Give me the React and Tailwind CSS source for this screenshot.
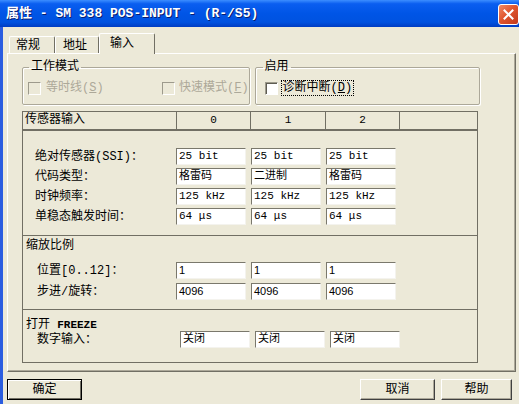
import React from 'react';

const box =
  'h-[17px] w-[70px] bg-white border border-t-[#7A786C] border-l-[#7A786C] border-b-[#F4F3EE] border-r-[#F4F3EE] pl-[2px] leading-[15px] text-[11px] whitespace-nowrap overflow-hidden';

const sensorRows = [
  { label: '绝对传感器(SSI)：', values: ['25 bit', '25 bit', '25 bit'] },
  { label: '代码类型：', values: ['格雷码', '二进制', '格雷码'] },
  { label: '时钟频率：', values: ['125 kHz', '125 kHz', '125 kHz'] },
  { label: '单稳态触发时间：', values: ['64 μs', '64 μs', '64 μs'] },
];

const scaleRows = [
  { label: '位置[0..12]：', values: ['1', '1', '1'] },
  { label: '步进/旋转：', values: ['4096', '4096', '4096'] },
];

const Checkbox = ({ disabled }) => (
  <span
    className={`inline-block w-[13px] h-[13px] shrink-0 border border-t-[#9D9A8C] border-l-[#9D9A8C] border-b-white border-r-white ${
      disabled ? 'bg-[#ECE9D8]' : 'bg-white shadow-[inset_1px_1px_0_#5E5C52]'
    }`}
  />
);

const Field = ({ value, sans }) => (
  <div className={`${box} ${sans ? "font-['Liberation_Sans','Noto_Sans_CJK_SC',sans-serif]" : ''}`}>{value}</div>
);

const Tab = ({ label, active, className }) => (
  <div
    className={`border-t border-l border-white border-r border-r-[#716F64] rounded-t-[2px] text-[12px] leading-[14px] ${
      active ? 'h-[21px] -mb-px relative z-10 bg-[#ECE9D8] pt-[3px]' : 'h-[17px] pt-[2px]'
    } ${className}`}
  >
    {label}
  </div>
);

const Button = ({ label, primary, className }) => (
  <button
    className={`h-[21px] text-[12px] leading-[14px] bg-[#ECE9D8] ${
      primary
        ? 'border border-black shadow-[inset_1px_1px_0_#fff,inset_-1px_-1px_0_#716F64]'
        : 'border border-t-white border-l-white border-r-[#404040] border-b-[#404040] shadow-[inset_-1px_-1px_0_#ACA899]'
    } ${className}`}
  >
    {label}
  </button>
);

export default function App() {
  return (
    <div className="w-[519px] h-[404px] bg-[#ECE9D8] flex flex-col overflow-hidden text-black font-['Liberation_Mono','Noto_Sans_CJK_SC',monospace]">
      {/* Title bar */}
      <div className="h-[27px] shrink-0 flex items-center justify-between bg-[linear-gradient(180deg,#3C8EFF_0%,#0A5EF0_14%,#0055E6_50%,#0052E0_82%,#003CC2_100%)]">
        <span className="pl-[6px] text-white font-bold text-[13px] leading-[16px] whitespace-nowrap [text-shadow:1px_1px_0_#0A1C6E]">
          属性 - SM 338 POS-INPUT - (R-/S5)
        </span>
        <div className="w-[21px] h-[21px] mt-[1px] rounded-[3px] border border-white bg-[linear-gradient(135deg,#F08A66_0%,#E0562F_45%,#C2381A_100%)] flex items-center justify-center">
          <svg width="11" height="11" viewBox="0 0 11 11">
            <path d="M1.5 1.5 L9.5 9.5 M9.5 1.5 L1.5 9.5" stroke="#fff" strokeWidth="2" strokeLinecap="square" />
          </svg>
        </div>
      </div>

      <div className="flex flex-1 min-h-0">
        <div className="w-[3px] shrink-0 bg-[#2B5DE0]" />
        <div className="flex-1 flex flex-col">
          {/* Tabs */}
          <div className="mt-[6px] h-[20px] flex items-end pl-[6px]">
            <Tab label="常规" className="w-[46px] pl-[6px]" />
            <Tab label="地址" className="w-[44px] pl-[7px]" />
            <Tab label="输入" active className="w-[56px] pl-[10px]" />
          </div>

          {/* Panel */}
          <div className="ml-[4px] w-[509px] h-[319px] border-t border-l border-white border-r border-b border-r-[#716F64] border-b-[#716F64] shadow-[inset_-1px_-1px_0_#ACA899] flex flex-col">
            <div className="flex mt-[6px] ml-[14px]">
              <fieldset className="w-[225px] h-[45px] border border-[#ACA899] rounded-[2px] shadow-[inset_1px_1px_0_#fff,1px_1px_0_#fff]">
                <legend className="ml-[6px] px-[2px] text-[12px] leading-[14px]">工作模式</legend>
                <div className="flex items-center pt-[7px] pl-[5px] text-[12px] leading-[14px] text-[#ACA899] whitespace-nowrap">
                  <Checkbox disabled />
                  <span className="ml-[5px] w-[116px]">
                    等时线(<span className="underline">S</span>)
                  </span>
                  <Checkbox disabled />
                  <span className="ml-[4px]">
                    快速模式(<span className="underline">F</span>)
                  </span>
                </div>
              </fieldset>
              <fieldset className="ml-[5px] w-[225px] h-[45px] border border-[#ACA899] rounded-[2px] shadow-[inset_1px_1px_0_#fff,1px_1px_0_#fff]">
                <legend className="ml-[7px] px-[2px] text-[12px] leading-[14px]">启用</legend>
                <div className="flex items-center pt-[6px] pl-[9px] text-[12px] leading-[14px] whitespace-nowrap">
                  <Checkbox />
                  <span className="ml-[3px] px-[1px] border border-dotted border-black">
                    诊断中断(<span className="underline">D</span>)
                  </span>
                </div>
              </fieldset>
            </div>

            {/* Sensor table */}
            <div className="mt-[6px] ml-[14px] w-[456px] h-[252px] border border-[#716F64] flex flex-col text-[12px]">
              <div className="h-[19px] shrink-0 flex border-b-2 border-[#716F64] leading-[17px]">
                <div className="w-[153px] pl-[2px]">传感器输入</div>
                <div className="w-[74px] border-l border-[#716F64] text-center text-[11px]">0</div>
                <div className="w-[75px] border-l border-[#716F64] text-center text-[11px]">1</div>
                <div className="w-[74px] border-l border-[#716F64] text-center text-[11px]">2</div>
                <div className="flex-1 border-l border-[#716F64]" />
              </div>

              <div className="h-[105px] shrink-0 border-b border-[#716F64] pt-[17px] flex flex-col gap-[3px]">
                {sensorRows.map((row) => (
                  <div key={row.label} className="flex items-center h-[17px]">
                    <div className="w-[153px] pl-[12px] leading-[14px] whitespace-nowrap">{row.label}</div>
                    <div className="flex gap-[5px]">
                      {row.values.map((v, i) => (
                        <Field key={i} value={v} />
                      ))}
                    </div>
                  </div>
                ))}
              </div>

              <div className="h-[74px] shrink-0 border-b border-[#716F64] pt-[3px]">
                <div className="pl-[3px] leading-[14px]">缩放比例</div>
                <div className="mt-[9px] flex flex-col gap-[4px]">
                  {scaleRows.map((row) => (
                    <div key={row.label} className="flex items-center h-[17px]">
                      <div className="w-[153px] pl-[14px] leading-[14px] whitespace-nowrap">{row.label}</div>
                      <div className="flex gap-[5px]">
                        {row.values.map((v, i) => (
                          <Field key={i} value={v} sans />
                        ))}
                      </div>
                    </div>
                  ))}
                </div>
              </div>

              <div className="flex-1 pt-[9px]">
                <div className="pl-[3px] leading-[12px]">
                  打开 <span className="font-bold text-[11px]">FREEZE</span>
                </div>
                <div className="flex items-center h-[17px]">
                  <div className="w-[157px] pl-[14px] leading-[14px]">数字输入：</div>
                  <div className="flex gap-[5px]">
                    <Field value="关闭" />
                    <Field value="关闭" />
                    <Field value="关闭" />
                  </div>
                </div>
              </div>
            </div>
          </div>

          {/* Buttons */}
          <div className="mt-[7px] flex">
            <Button label="确定" primary className="ml-[4px] w-[75px]" />
            <div className="flex-1" />
            <Button label="取消" className="w-[75px]" />
            <Button label="帮助" className="ml-[6px] mr-[7px] w-[71px]" />
          </div>
        </div>
      </div>
    </div>
  );
}
